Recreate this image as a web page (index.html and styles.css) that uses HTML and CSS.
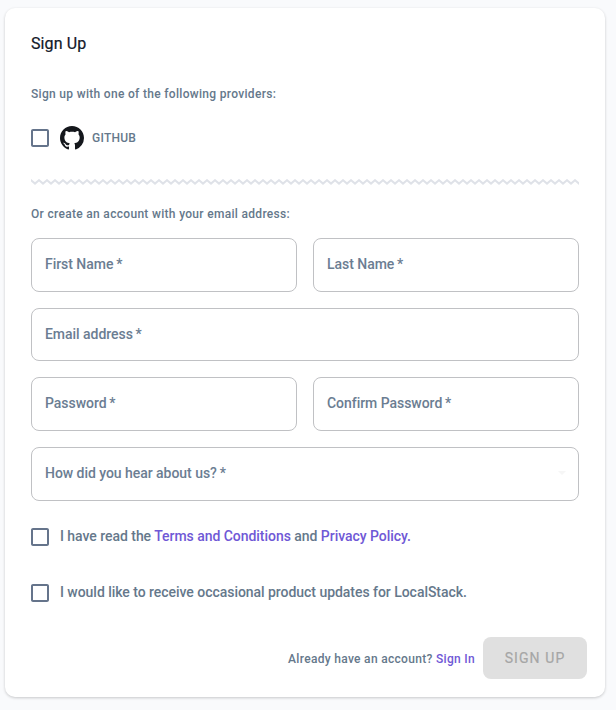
FILE: index.html
```
<!DOCTYPE html>
<html lang="en">
<head>
<meta charset="utf-8">
<title>Sign Up</title>
<link rel="stylesheet" href="styles.css">
</head>
<body>
<main class="card">
  <h1 class="title">Sign Up</h1>
  <p class="caption">Sign up with one of the following providers:</p>
  <div class="provider">
    <svg class="checkbox" viewBox="0 0 24 24"><path d="M19 5v14H5V5h14m0-2H5c-1.100 0-2 .9-2 2v14c0 1.100.9 2 2 2h14c1.100 0 2-.9 2-2V5c0-1.100-.9-2-2-2z"/></svg>
    <svg class="github" viewBox="0 0 16 16"><path d="M8 0C3.580 0 0 3.580 0 8c0 3.540 2.290 6.530 5.470 7.590.4.070.55-.17.55-.38 0-.19-.01-.82-.01-1.490-2.010.37-2.530-.49-2.690-.94-.09-.23-.48-.94-.82-1.130-.28-.15-.68-.52-.01-.53.63-.01 1.080.58 1.230.82.72 1.210 1.870.87 2.330.66.07-.52.28-.87.51-1.070-1.780-.2-3.640-.89-3.640-3.950 0-.87.31-1.590.82-2.150-.08-.2-.36-1.020.08-2.120 0 0 .67-.21 2.200.82.64-.18 1.320-.27 2-.27s1.360.09 2 .27c1.530-1.040 2.200-.82 2.200-.82.44 1.100.16 1.920.08 2.120.51.56.82 1.270.82 2.150 0 3.070-1.870 3.750-3.650 3.950.29.25.54.73.54 1.480 0 1.070-.01 1.930-.01 2.200 0 .21.15.46.55.38A8.010 8.010 0 0 0 16 8c0-4.420-3.580-8-8-8z"/></svg>
    <span>GITHUB</span>
  </div>
  <svg class="zigzag" width="548" height="6">
    <defs><pattern id="wave" width="8" height="6" patternUnits="userSpaceOnUse"><path d="M-4 4.600 0 1.200 4 4.600 8 1.200 12 4.600"/></pattern></defs>
    <rect width="548" height="6" fill="url(#wave)"/>
  </svg>
  <p class="caption account">Or create an account with your email address:</p>
  <form class="fields">
    <div class="field">First Name&thinsp;*</div>
    <div class="field">Last Name&thinsp;*</div>
    <div class="field wide email">Email address&thinsp;*</div>
    <div class="field">Password&thinsp;*</div>
    <div class="field">Confirm Password&thinsp;*</div>
    <div class="field wide">How did you hear about us?&thinsp;*<i class="arrow"></i></div>
  </form>
  <div class="option terms">
    <svg class="checkbox" viewBox="0 0 24 24"><path d="M19 5v14H5V5h14m0-2H5c-1.100 0-2 .9-2 2v14c0 1.100.9 2 2 2h14c1.100 0 2-.9 2-2V5c0-1.100-.9-2-2-2z"/></svg>
    <span>I have read the <a>Terms and Conditions</a> and <a>Privacy Policy.</a></span>
  </div>
  <div class="option">
    <svg class="checkbox" viewBox="0 0 24 24"><path d="M19 5v14H5V5h14m0-2H5c-1.100 0-2 .9-2 2v14c0 1.100.9 2 2 2h14c1.100 0 2-.9 2-2V5c0-1.100-.9-2-2-2z"/></svg>
    <span>I would like to receive occasional product updates for LocalStack.</span>
  </div>
  <footer class="actions">
    <span class="caption signin">Already have an account? <a>Sign In</a></span>
    <button class="submit" disabled>SIGN UP</button>
  </footer>
</main>
</body>
</html>
```
FILE: styles.css
```
* { box-sizing: border-box; }
body {
  margin: 0;
  padding: 8px 11px 0 5px;
  min-height: 710px;
  background: #f9fafc;
  font-family: Roboto, sans-serif;
  font-weight: 500;
  color: #65788b;
}
.card {
  height: 689px;
  padding: 24px 26px 0;
  background: #fff;
  border-radius: 10px;
  box-shadow: 0 1px 3px rgba(0, 0, 0, .2);
  display: flex;
  flex-direction: column;
}
.title {
  margin: 0;
  font-size: 16px;
  font-weight: 400;
  line-height: 24px;
  letter-spacing: .1px;
  color: #121828;
  -webkit-text-stroke: .2px #121828;
}
.caption {
  margin: 0;
  font-size: 12px;
  line-height: 20px;
  letter-spacing: .31px;
}
.title + .caption { margin-top: 28px; }
a { color: #6f58d6; }
.provider {
  display: flex;
  align-items: center;
  height: 24px;
  margin-top: 22px;
  font-size: 12px;
  letter-spacing: .25px;
}
.checkbox {
  flex: none;
  width: 24px;
  height: 24px;
  margin-left: -3px;
  fill: #65748b;
}
.github {
  width: 24px;
  height: 24px;
  margin: 0 8px;
  fill: #14171c;
}
.zigzag { display: block; flex: none; margin-top: 29px; }
.zigzag path { fill: none; stroke: #dfe2e8; stroke-width: 2; }
.account { margin-top: 19px; }
.fields {
  display: grid;
  grid-template-columns: 1fr 1fr;
  grid-auto-rows: 53.625px;
  gap: 16px;
  margin-top: 14px;
}
.field {
  display: flex;
  align-items: center;
  padding: 0 13px 2px;
  border: 1px solid #c0c1c4;
  border-radius: 8px;
  font-size: 14px;
  letter-spacing: -.04px;
  color: #6b7d92;
}
.email { padding-bottom: 0; }
.wide { grid-column: 1 / 3; }
.arrow {
  margin: 1px -1px 0 auto;
  border: 4px solid transparent;
  border-top-color: #f6f6f6;
  border-bottom: 0;
}
.option {
  display: flex;
  align-items: center;
  height: 24px;
  margin-top: 32px;
  font-size: 14px;
  letter-spacing: -.04px;
}
.terms { margin-top: 24px; }
.option span { margin: -2px 0 0 8px; }
.actions {
  display: flex;
  justify-content: flex-end;
  align-items: center;
  gap: 8px;
  margin: 32px -8px 0 0;
}
.signin { padding-top: 2px; }
.submit {
  width: 104px;
  height: 42px;
  border: 0;
  padding: 0;
  border-radius: 8px;
  background: #e0e0e0;
  color: #a6a6a6;
  font: 400 14px Roboto, sans-serif;
  letter-spacing: 1.1px;
  -webkit-text-stroke: .2px #a6a6a6;
}
```
